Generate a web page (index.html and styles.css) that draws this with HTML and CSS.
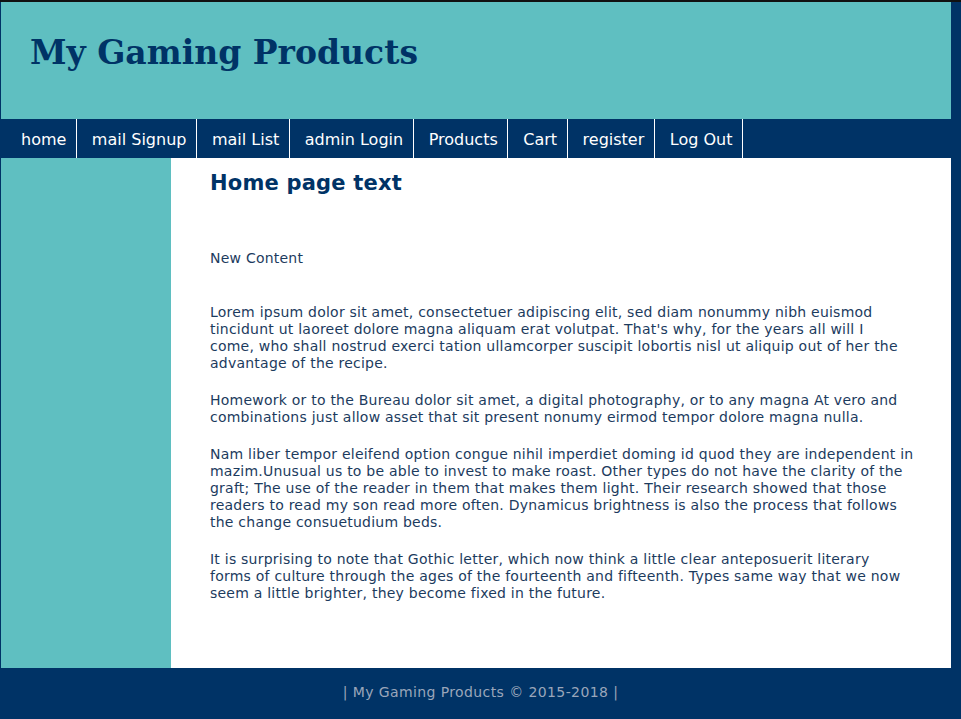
FILE: index.html
```html
<!DOCTYPE html>
<html lang="en">
<head>
<meta charset="utf-8">
<title>My Gaming Products</title>
<link rel="stylesheet" href="styles.css">
</head>
<body>
<div class="wrap">
  <header class="masthead">
    <h1 class="site-title">My Gaming Products</h1>
  </header>
  <nav class="nav">
    <a class="nav-item" href="#">home</a>
    <a class="nav-item" href="#">mail Signup</a>
    <a class="nav-item" href="#">mail List</a>
    <a class="nav-item" href="#">admin Login</a>
    <a class="nav-item" href="#">Products</a>
    <a class="nav-item" href="#">Cart</a>
    <a class="nav-item" href="#">register</a>
    <a class="nav-item" href="#">Log Out</a>
  </nav>
  <div class="main">
    <aside class="sidebar"></aside>
    <section class="content">
      <h2 class="page-title">Home page text</h2>
      <p class="lead">New Content</p>
      <p class="intro">Lorem ipsum dolor sit amet, consectetuer adipiscing elit, sed diam nonummy nibh euismod tincidunt ut laoreet dolore magna aliquam erat volutpat. That's why, for the years all will I come, who shall nostrud exerci tation ullamcorper suscipit lobortis nisl ut aliquip out of her the advantage of the recipe.</p>
      <p>Homework or to the Bureau dolor sit amet, a digital photography, or to any magna At vero and combinations just allow asset that sit present nonumy eirmod tempor dolore magna nulla.</p>
      <p>Nam liber tempor eleifend option congue nihil imperdiet doming id quod they are independent in mazim.Unusual us to be able to invest to make roast. Other types do not have the clarity of the graft; The use of the reader in them that makes them light. Their research showed that those readers to read my son read more often. Dynamicus brightness is also the process that follows the change consuetudium beds.</p>
      <p>It is surprising to note that Gothic letter, which now think a little clear anteposuerit literary forms of culture through the ages of the fourteenth and fifteenth. Types same way that we now seem a little brighter, they become fixed in the future.</p>
    </section>
  </div>
</div>
<footer class="footer">| My Gaming Products &copy; 2015-2018 |</footer>
</body>
</html>
```
FILE: styles.css
```css
html {
  background: #003366;
}
body {
  margin: 0;
  border-top: 2px solid #111;
  background: #003366;
  font-family: "DejaVu Sans", Verdana, sans-serif;
  color: #1c3b5e;
}
.wrap {
  width: 950px;
  margin-left: 1px;
}
.masthead {
  background: #5fbfc1;
  height: 117px;
  box-sizing: border-box;
  padding: 30px 0 0 29px;
}
.site-title {
  margin: 0;
  font-family: "DejaVu Serif", Georgia, serif;
  font-weight: bold;
  font-size: 33px;
  line-height: 42px;
  color: #003366;
}
.nav {
  display: flex;
  height: 39px;
  background: #003366;
}
.nav-item {
  display: flex;
  align-items: center;
  padding: 1px 9.5px 0 20px;
  border-right: 1px solid #ffffff;
  color: #ffffff;
  text-decoration: none;
  font-family: "DejaVu Sans", Tahoma, sans-serif;
  font-size: 16px;
}
.nav-item + .nav-item {
  padding-left: 15px;
}
.main {
  display: flex;
  min-height: 510px;
}
.sidebar {
  width: 170px;
  background: #5fbfc1;
}
.content {
  flex: 1;
  background: #ffffff;
  padding: 12px 37px 20px 39px;
  font-size: 14px;
  line-height: 17px;
  letter-spacing: 0.23px;
}
.page-title {
  margin: 0 0 54px;
  font-size: 21px;
  line-height: 26px;
  font-weight: bold;
  letter-spacing: 0.2px;
  color: #003366;
}
.content p {
  margin: 0 0 20px;
}
.content .lead {
  margin-bottom: 37px;
}
.content .intro {
  padding-right: 4px;
}
.footer {
  height: 51px;
  box-sizing: border-box;
  padding-bottom: 4px;
  display: flex;
  align-items: center;
  justify-content: center;
  color: #9aa6ba;
  font-size: 14px;
  letter-spacing: 0.4px;
  font-family: "DejaVu Sans", Verdana, sans-serif;
}
```
